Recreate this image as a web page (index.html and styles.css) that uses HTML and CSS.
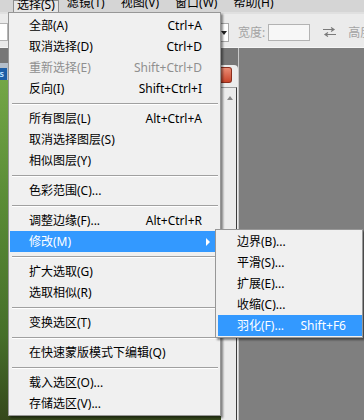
FILE: index.html
```html
<!DOCTYPE html>
<html lang="zh-CN">

<head>
    <meta charset="UTF-8">
    <meta name="viewport" content="width=device-width, initial-scale=1.0">
    <title>选择菜单</title>
    <link rel="stylesheet" href="styles.css">
</head>

<body>

    <div id="app">
        <!-- 顶部菜单栏 -->
        <div class="menubar">
            <span class="mb-item open">选择(S)</span>
            <span class="mb-item">滤镜(T)</span>
            <span class="mb-item">视图(V)</span>
            <span class="mb-item">窗口(W)</span>
            <span class="mb-item">帮助(H)</span>
        </div>

        <!-- 选项栏 -->
        <div class="options">
            <span class="field-left"></span>
            <span class="combo"><span class="combo-arrow"></span></span>
            <span class="opt-label">宽度:</span>
            <span class="opt-input"></span>
            <svg class="swap" width="13" height="10" viewBox="0 0 13 10">
                <path d="M0 2.5h10M8 0.5l3 2-3 2" fill="none" stroke="#7a7a7a" stroke-width="1.2" />
                <path d="M13 7.5h-10M5 5.5l-3 2 3 2" fill="none" stroke="#7a7a7a" stroke-width="1.2" />
            </svg>
            <span class="opt-label">高度:</span>
        </div>

        <!-- 工作区 -->
        <div class="workspace">
            <div class="doc">
                <div class="doc-title"><span class="ps">Ps</span></div>
                <div class="doc-image"></div>
            </div>
            <div class="panel">
                <div class="panel-close"></div>
                <div class="panel-body"><span class="scroll-up"></span></div>
            </div>
            <div class="canvas"></div>
        </div>

        <!-- 选择 下拉菜单 -->
        <ul class="menu main-menu">
            <li class="item"><span>全部(A)</span><span>Ctrl+A</span></li>
            <li class="item"><span>取消选择(D)</span><span>Ctrl+D</span></li>
            <li class="item disabled"><span>重新选择(E)</span><span>Shift+Ctrl+D</span></li>
            <li class="item"><span>反向(I)</span><span>Shift+Ctrl+I</span></li>
            <li class="sep"></li>
            <li class="item"><span>所有图层(L)</span><span>Alt+Ctrl+A</span></li>
            <li class="item"><span>取消选择图层(S)</span></li>
            <li class="item"><span>相似图层(Y)</span></li>
            <li class="sep"></li>
            <li class="item"><span>色彩范围(C)...</span></li>
            <li class="sep"></li>
            <li class="item"><span>调整边缘(F)...</span><span>Alt+Ctrl+R</span></li>
            <li class="item active"><span>修改(M)</span><span class="arrow"></span></li>
            <li class="sep"></li>
            <li class="item"><span>扩大选取(G)</span></li>
            <li class="item"><span>选取相似(R)</span></li>
            <li class="sep"></li>
            <li class="item"><span>变换选区(T)</span></li>
            <li class="sep"></li>
            <li class="item"><span>在快速蒙版模式下编辑(Q)</span></li>
            <li class="sep"></li>
            <li class="item"><span>载入选区(O)...</span></li>
            <li class="item"><span>存储选区(V)...</span></li>
        </ul>

        <!-- 修改 子菜单 -->
        <ul class="menu sub-menu">
            <li class="item"><span>边界(B)...</span></li>
            <li class="item"><span>平滑(S)...</span></li>
            <li class="item"><span>扩展(E)...</span></li>
            <li class="item"><span>收缩(C)...</span></li>
            <li class="item active"><span>羽化(F)...</span><span>Shift+F6</span></li>
        </ul>
    </div>

</body>

</html>
```

FILE: styles.css
```css
* {
    margin: 0;
    padding: 0;
    box-sizing: border-box;
}

ul {
    list-style: none;
}

body {
    width: 364px;
    height: 420px;
    overflow: hidden;
    font-family: "Noto Sans", "Noto Sans CJK SC", sans-serif;
    font-size: 12px;
    color: #000;
}

#app {
    width: 364px;
    height: 420px;
    position: relative;
    display: flex;
    flex-direction: column;
    background: #777;
}

/* 菜单栏 */
.menubar {
    height: 12px;
    overflow: hidden;
    display: flex;
    align-items: flex-start;
    padding-left: 13px;
    background: #d5d5d5;
}

.mb-item {
    display: block;
    flex-shrink: 0;
    line-height: 12px;
    margin-top: -3px;
    padding: 0 8px;
    white-space: nowrap;
}

.mb-item.open {
    margin-top: 0;
    padding: 0 3px;
    height: 12px;
    line-height: 8px;
    border: 1px solid #8e8e8e;
    border-bottom: none;
    background: #e6e6e6;
}

/* 选项栏 */
.options {
    height: 36px;
    display: flex;
    align-items: center;
    padding-top: 3px;
    background: #ebebeb;
    border-top: 2px solid #e0e0e0;
    border-bottom: 1px solid #f6f6f6;
    overflow: hidden;
}

.options > * {
    flex-shrink: 0;
}

.field-left {
    width: 8px;
    height: 18px;
    background: #fff;
    border: 1px solid #b5b5b5;
    border-left: none;
}

.combo {
    width: 29px;
    height: 19px;
    margin-left: 192px;
    background: #fff;
    border: 1px solid #a9a9a9;
    position: relative;
}

.combo-arrow {
    position: absolute;
    left: 20px;
    top: 7px;
    border-top: 4px solid #222;
    border-left: 3px solid transparent;
    border-right: 3px solid transparent;
}

.opt-label {
    margin-left: 9px;
    color: #a3a3a3;
    white-space: nowrap;
}

.opt-input {
    width: 42px;
    height: 17px;
    margin-left: 3px;
    background: #f7f7f7;
    border: 1px solid #b3b3b3;
}

.swap {
    margin-left: 13px;
    margin-right: 3px;
}

/* 工作区 */
.workspace {
    flex: 1;
    display: flex;
    min-height: 0;
}

.doc {
    width: 221px;
    flex-shrink: 0;
    margin-top: 15px;
    display: flex;
    flex-direction: column;
}

.doc-title {
    height: 17px;
    padding-top: 5px;
    background: #b4bfcb;
    overflow: hidden;
}

.ps {
    display: block;
    width: 16px;
    height: 12px;
    margin-left: -9px;
    background: #1c5ea6;
    color: #b5dcff;
    font-size: 9px;
    font-weight: bold;
    line-height: 12px;
    text-align: center;
}

.doc-image {
    flex: 1;
    background: linear-gradient(#74a646, #5a8c36 35%, #466f2a 75%, #35481c);
}

.panel {
    width: 17px;
    flex-shrink: 0;
    margin-top: 17px;
    background: #ececec;
    border-top-right-radius: 4px;
    display: flex;
    flex-direction: column;
}

.panel-close {
    width: 11px;
    height: 16px;
    margin-top: 2px;
    background: linear-gradient(#ea8c74, #c9452b);
    border: 1px solid #8c2f1e;
    border-left: none;
    border-radius: 0 3px 3px 0;
}

.panel-body {
    flex: 1;
    width: 16px;
    margin-top: 4px;
    border-top: 1px solid #9c9c9c;
    border-right: 1px solid #3c3c3c;
    padding: 8px 0 0 6px;
}

.scroll-up {
    display: block;
    width: 0;
    border-bottom: 4px solid #8a8a8a;
    border-left: 3px solid transparent;
    border-right: 3px solid transparent;
}

.canvas {
    flex: 1;
    background: #7f7f7f;
    border-left: 1px solid #c9c9c9;
}

/* 下拉菜单 */
.menu {
    position: absolute;
    background: #f0f0f0;
    border: 1px solid #979797;
    box-shadow: 2px 2px 2px rgba(0, 0, 0, 0.45);
}

.main-menu {
    left: 8px;
    top: 12px;
    width: 213px;
    padding: 2px 1px 1px 1px;
}

.sub-menu {
    left: 215px;
    top: 229px;
    width: 148px;
    padding: 1px 0 1px 2px;
}

.item {
    height: 21px;
    line-height: 21px;
    display: flex;
    justify-content: space-between;
    align-items: center;
    padding: 0 17px 0 19px;
    white-space: nowrap;
}

.sub-menu .item {
    padding-right: 16px;
}

.item.disabled {
    color: #8f8f8f;
}

.item.active {
    background: #3399ff;
    color: #fff;
}

.arrow {
    width: 0;
    margin-right: -8px;
    border-left: 4px solid #fff;
    border-top: 4px solid transparent;
    border-bottom: 4px solid transparent;
}

.sep {
    height: 2px;
    margin: 4px 1px 3px 2px;
    border-top: 1px solid #a0a0a0;
    border-bottom: 1px solid #fff;
}
```
